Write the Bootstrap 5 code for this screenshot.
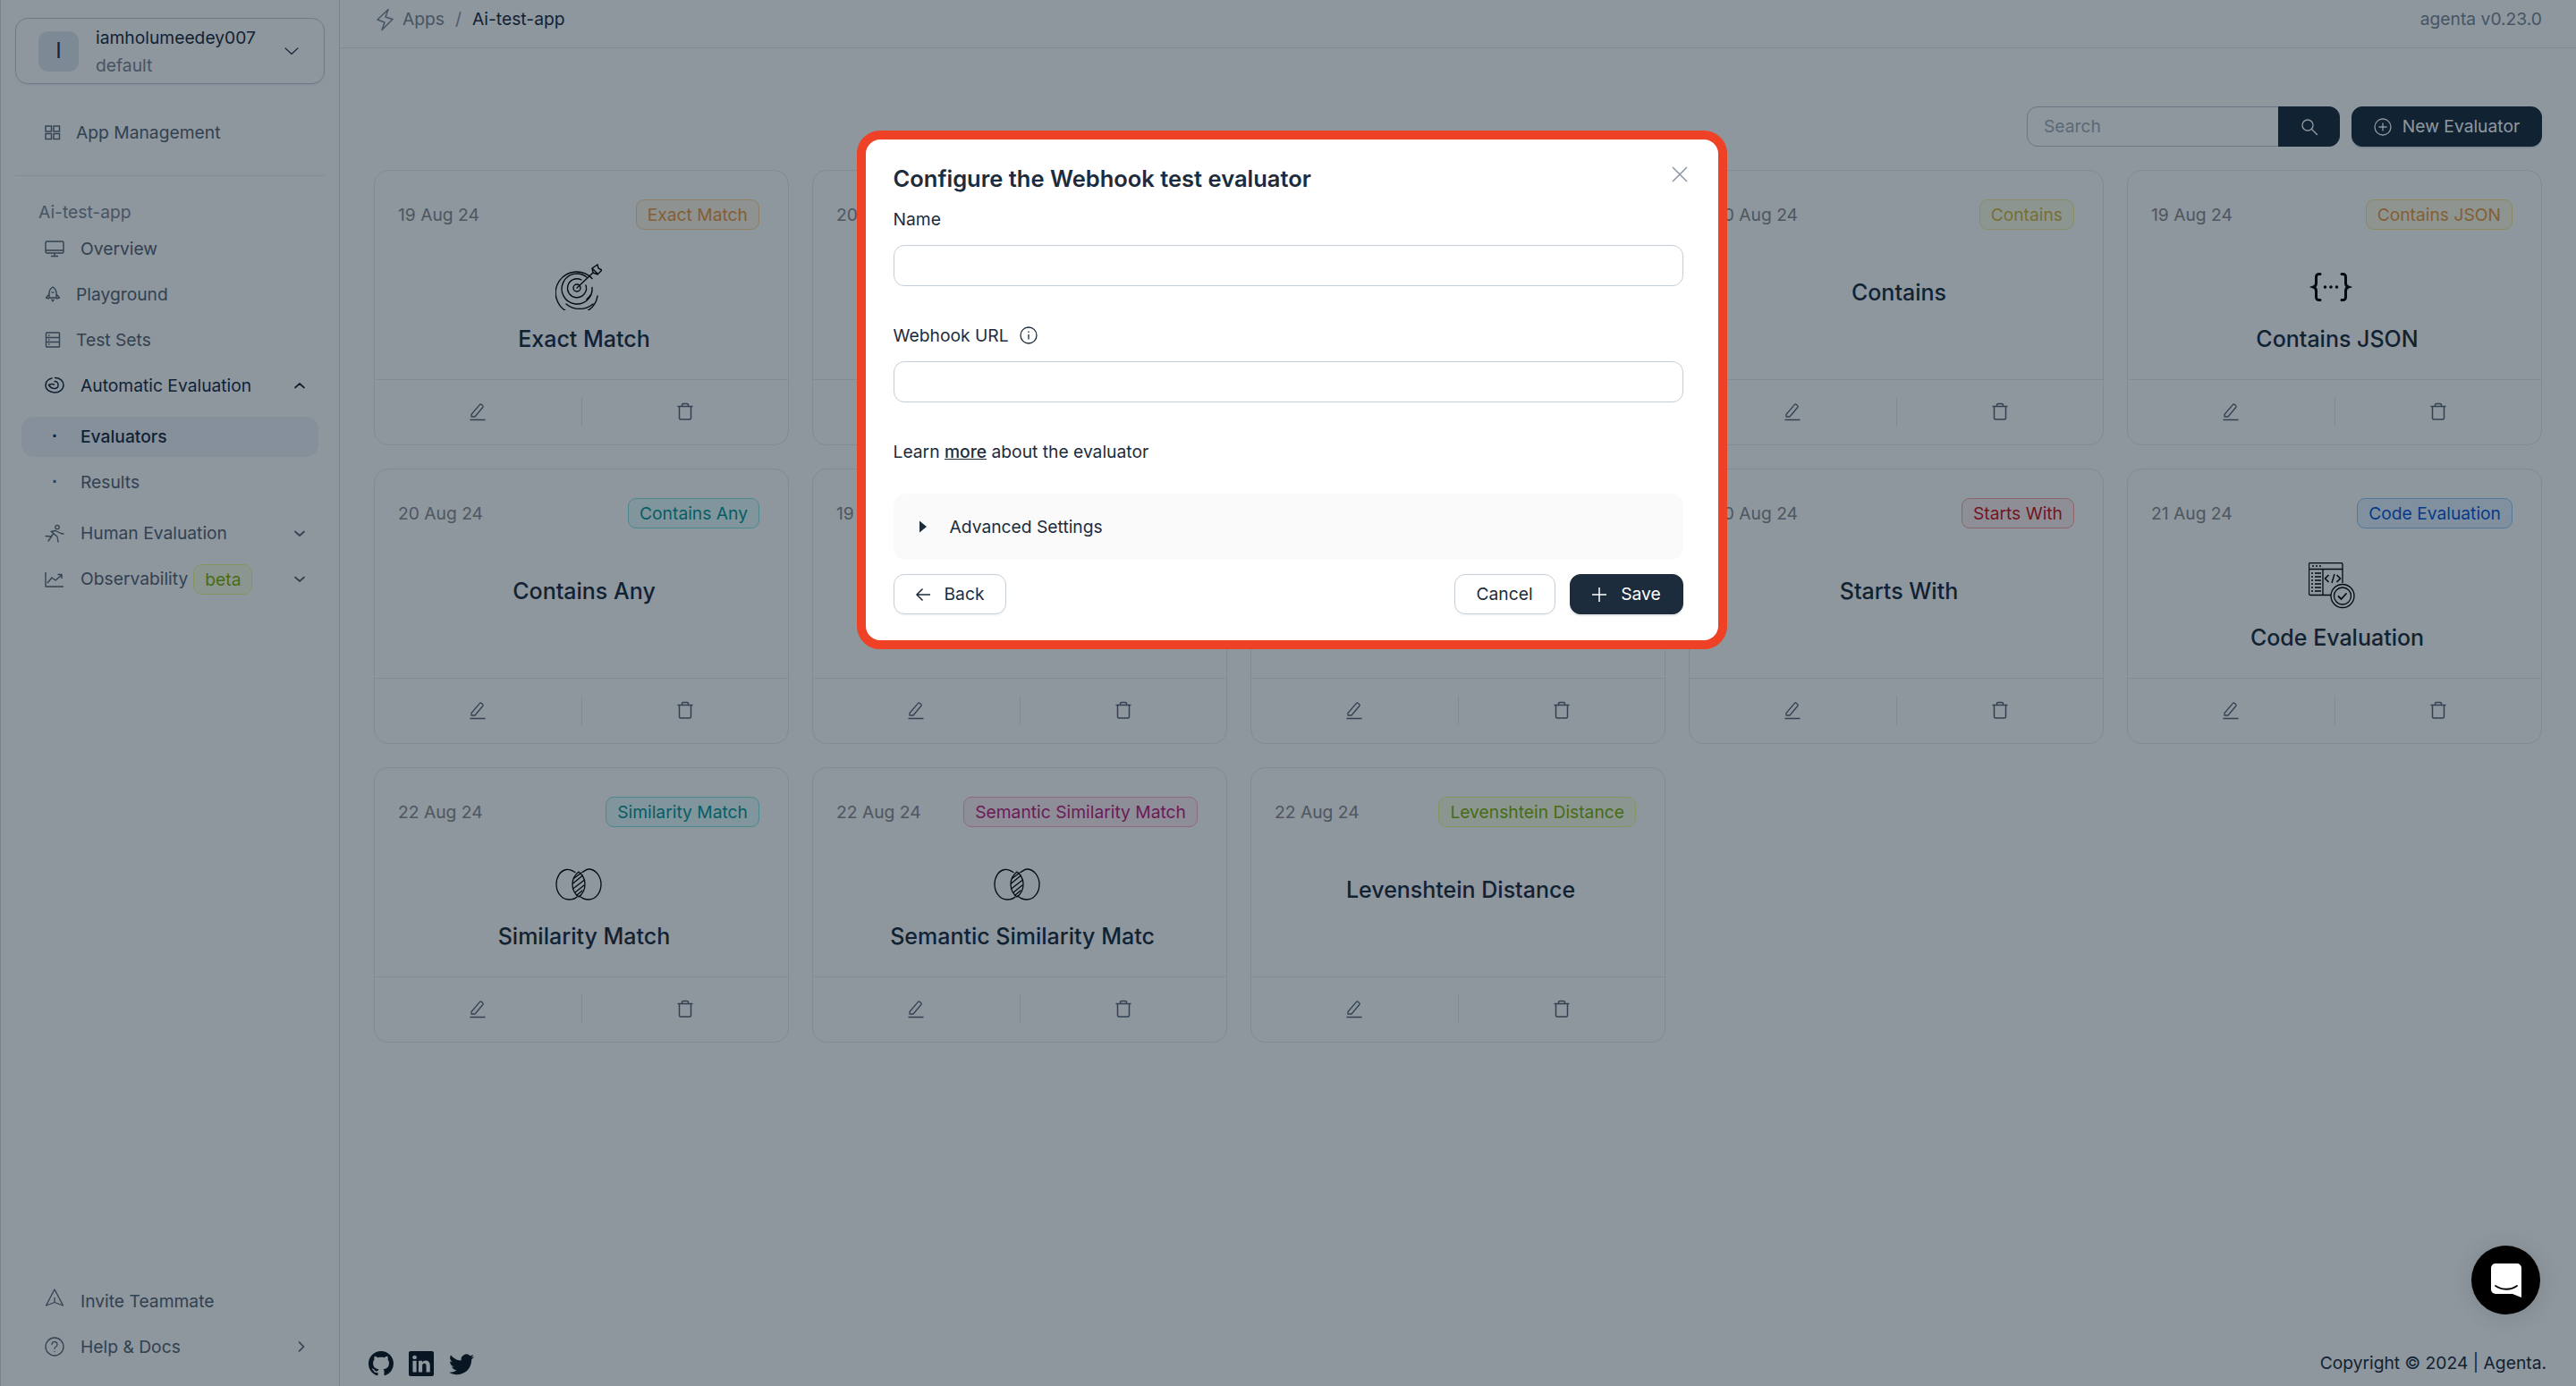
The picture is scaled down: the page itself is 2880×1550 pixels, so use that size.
<!DOCTYPE html>
<html lang="en">
<head>
    <meta charset="UTF-8">
    <title>Evaluators - Agenta</title>
    <link href="https://cdn.jsdelivr.net/npm/bootstrap@5.3.2/dist/css/bootstrap.min.css" rel="stylesheet">
    <style>
        html, body { height: 100%; }
        body {
            font-family: Inter, "Liberation Sans", sans-serif;
            font-size: 19.25px;
            color: #1c2c3d;
            background: #fff;
            overflow: hidden;
        }
        .page-wrap { height: 100vh; }

        /* sidebar */
        .side-bar {
            width: 380px;
            flex: none;
            border-left: 1px solid #d8dde3;
            border-right: 1px solid #d8dde3;
            padding: 20px 16px 21px;
        }
        .org-select {
            height: 74px;
            border: 1px solid #c5ced8;
            border-radius: 14px;
            padding: 0 27px 0 25px;
            box-shadow: 0 1px 2px rgba(28, 44, 61, .08);
        }
        .org-avatar {
            width: 45px;
            height: 45px;
            border-radius: 11px;
            background: #e2e8f0;
            margin-right: 19px;
            font-size: 24px;
        }
        .org-name { line-height: 32px; }
        .org-sub { line-height: 32px; color: #7d8996; margin-top: -1px; }
        .side-link {
            height: 46px;
            padding: 0 20px 0 33px;
            color: #586673;
            border-radius: 14px;
            text-decoration: none;
            white-space: nowrap;
        }
        .side-link .ico-s { width: 18px; height: 18px; margin-right: 17px; flex: none; }
        .side-link .ico-w { width: 22px; height: 22px; margin-right: 18px; flex: none; }
        .side-link .dot-mark { width: 22px; margin-right: 18px; text-align: center; line-height: 1; flex: none; font-weight: 700; }
        .side-link.is-open { color: #1c2c3d; }
        .side-link.is-active { color: #1c2c3d; background: #f1f4f8; height: 45px; font-weight: 500; margin: 0 7px; padding: 0 14px 0 26px; }
        .side-link .chev { margin-left: auto; width: 16px; height: 16px; flex: none; }
        .side-link .chev-far { margin-right: -2px; }
        .link-first { margin-top: 31px; }
        .ico-raised { margin-top: -6px; }
        .side-rule { border-top: 1px solid #e6ebf0; margin: 25px 0 26px; }
        .side-head { height: 28px; line-height: 28px; padding-left: 26px; color: #7d8996; margin-bottom: 4px; }
        .side-nav { gap: 5px; }
        .sub-nav { gap: 5.5px; margin: 6.5px 0; }
        .beta-tag {
            margin-left: 6px;
            height: 34px;
            padding: 0 12px;
            line-height: 32px;
            color: #7cb305;
            background: #fcffe6;
            border: 1px solid #eaff8f;
            border-radius: 10px;
        }

        /* main */
        .main-area { min-width: 0; }
        .top-strip { height: 54px; border-bottom: 1px solid #e6ebf0; padding: 0 38px 10px 40px; }
        .top-strip .breadcrumb { --bs-breadcrumb-margin-bottom: 0; --bs-breadcrumb-item-padding-x: 12px; --bs-breadcrumb-divider-color: #8a95a1; }
        .top-strip .breadcrumb-item, .top-strip .breadcrumb-item.active { color: #1c2c3d; }
        .top-strip .breadcrumb-item.crumb-link { color: #7d8996; }
        .top-strip .ico-bolt { width: 22px; height: 26px; margin-right: 8px; }
        .app-ver { color: #7d8996; }
        .main-body { padding: 65px 38px 0; }
        .tool-row { margin-bottom: 26px; }
        .search-box { width: 350px; margin-right: 13px; }
        .search-box .form-control {
            height: 45px;
            border-color: #bcc6d0;
            border-radius: 12px 0 0 12px;
            font-size: 19.25px;
            padding: 0 12px 2px 18px;
        }
        .search-box .form-control::placeholder { color: #a4adb8; }
        .btn-dark-app {
            background: #1c2c3d;
            border-color: #1c2c3d;
            color: #fff;
            font-size: 19.25px;
            box-shadow: 0 2px 0 rgba(28, 44, 61, .1);
        }
        .btn-dark-app:hover { background: #1c2c3d; color: #fff; }
        .search-box .btn-dark-app { width: 69px; padding: 0; border-radius: 0 12px 12px 0; box-shadow: none; }
        .btn-new { height: 45px; width: 213px; border-radius: 12px; padding: 0; }
        .btn-new svg { width: 20px; height: 20px; margin-right: 12px; }

        /* cards */
        .eval-grid { --bs-gutter-x: 26px; --bs-gutter-y: 26px; }
        .eval-card { height: 308px; border-color: #e6ebf0; border-radius: 16px; --bs-card-bg: #fff; }
        .eval-top { height: 34px; margin: 32px 32px 39px 26px; }
        .eval-date { color: #8c8c8c; }
        .eval-tag {
            height: 34px;
            padding: 0 12px;
            line-height: 32px;
            border: 1px solid;
            border-radius: 9px;
            white-space: nowrap;
        }
        .eval-ico { display: block; width: 52px; height: 52px; margin: 0 auto; position: relative; left: -3px; top: -1px; color: #000; }
        .eval-title { font-size: 25px; line-height: 32px; font-weight: 500; text-align: center; padding: 15px 0 0 6px; white-space: nowrap; }
        .eval-actions { height: 73px; margin-top: auto; border-top: 1px solid #e6ebf0; padding: 0 0 2px; flex: none; }
        .eval-btn { flex: 1; height: 33px; color: #586673; }
        .eval-btn + .eval-btn { border-left: 1px solid #e6ebf0; }
        .eval-btn svg { width: 20px; height: 22px; }
        .tag-orange { color: #ee9a3c; background: #fff7e6; border-color: #ffd591; }
        .tag-gold { color: #ee9a3c; background: #fffbe6; border-color: #ffe58f; }
        .tag-yellow { color: #d4b93a; background: #fefde8; border-color: #f5ee9a; }
        .tag-cyan { color: #08979c; background: #e6fffb; border-color: #87e8de; }
        .tag-red { color: #cf1322; background: #fff1f0; border-color: #ffa39e; }
        .tag-blue { color: #0958d9; background: #e6f4ff; border-color: #91caff; }
        .tag-magenta { color: #c41d7f; background: #fff0f6; border-color: #ffadd2; }
        .tag-lime { color: #7cb305; background: #fcffe6; border-color: #eaff8f; }

        .foot-strip { padding: 0 33px 11px 32px; margin-top: auto; }
        .foot-links { gap: 17px; color: #0b1520; }
        .foot-links svg { width: 28px; height: 28px; display: block; }

        /* overlay + dialog */
        .dim-layer { position: fixed; inset: 0; background: rgba(5, 23, 41, .45); z-index: 100; }
        .config-dialog {
            position: fixed;
            left: 957.5px;
            top: 146px;
            width: 973px;
            height: 580px;
            z-index: 110;
            background: #fff;
            border: 10px solid #ee4126;
            border-radius: 26px;
            padding: 28px 39px 0 31px;
        }
        .dialog-title { font-size: 25.5px; line-height: 32px; font-weight: 600; margin: 0 0 14px; }
        .dialog-close { position: absolute; top: 30px; right: 34px; width: 18px; height: 18px; color: #8a95a1; }
        .field-label { line-height: 30px; margin-bottom: 14px; }
        .field-info { margin-left: 12px; }
        .field-input { height: 46px; border-color: #c5ced8; border-radius: 12px; }
        .field-gap { margin-bottom: 40px; }
        .learn-line { line-height: 30px; margin: 40px 0 32px; }
        .learn-line a { color: #1c2c3d; font-weight: 500; }
        .adv-box { height: 74px; background: #fafafa; border-radius: 14px; padding: 0 0 0 28px; margin-bottom: 16px; }
        .adv-caret { width: 10px; height: 14px; margin-right: 25px; color: #1c2c3d; }
        .btn-plain {
            height: 45px;
            border: 1px solid #c5ced8;
            border-radius: 12px;
            background: #fff;
            color: #1c2c3d;
            font-size: 19.25px;
            padding: 0;
            box-shadow: 0 2px 0 rgba(28, 44, 61, .03);
        }
        .btn-back { width: 126px; }
        .btn-back svg, .btn-save svg { width: 18px; height: 18px; margin-right: 15px; }
        .btn-cancel { width: 113px; margin-right: 16px; }
        .btn-save { width: 127px; height: 45px; border-radius: 12px; padding: 0; }

        .chat-bubble {
            position: fixed;
            left: 2763px;
            top: 1393px;
            width: 77px;
            height: 77px;
            border-radius: 50%;
            background: #000;
            z-index: 120;
            box-shadow: 0 2px 24px rgba(0, 0, 0, .12);
        }
        .chat-bubble svg { width: 34px; height: 38px; }
    </style>
</head>
<body>
    <svg width="0" height="0" class="position-absolute">
        <defs>
            <symbol id="i-edit" viewBox="0 0 20 22"><path d="M3 14.500 12.300 3.600a1.500 1.500 0 0 1 2.100-.2l1.200 1a1.500 1.500 0 0 1 .2 2.100L7 17H3z M1.500 20.500h17" fill="none" stroke="currentColor" stroke-width="1.300" stroke-linejoin="round"/></symbol>
            <symbol id="i-trash" viewBox="0 0 20 22"><path d="M1.500 5.500h17 M6.500 5.500V4a1.500 1.500 0 0 1 1.500-1.500h4A1.500 1.500 0 0 1 13.500 4v1.500 M3.500 5.500v13a1.500 1.500 0 0 0 1.500 1.500h10a1.500 1.500 0 0 0 1.500-1.500v-13" fill="none" stroke="currentColor" stroke-width="1.500" stroke-linejoin="round"/></symbol>
            <symbol id="i-down" viewBox="0 0 16 16"><path d="M3 5.500 8 10l5-4.500" fill="none" stroke="currentColor" stroke-width="1.700" stroke-linecap="round" stroke-linejoin="round"/></symbol>
            <symbol id="i-target" viewBox="0 0 52 52" fill="none" stroke="currentColor" stroke-width="1.400" stroke-linecap="round">
                <path d="M41 16.500A23.500 23.500 0 1 0 47 36M12 45a23.500 23.500 0 0 0 30 0"/>
                <path d="M35 15A17 17 0 1 0 41 26.500M39 35a17 17 0 0 1-4 4.500"/>
                <path d="M29 18A10.500 10.500 0 1 0 34 24"/>
                <circle cx="24" cy="27" r="4"/>
                <path d="M24 27 42 10M42 10l-1-5 6-4 1 4 4 2-5 5z M41 5l6 6"/>
            </symbol>
            <symbol id="i-json" viewBox="0 0 52 52" fill="none" stroke="currentColor" stroke-width="3" stroke-linecap="round">
                <path d="M13 11.500h-1.500a3 3 0 0 0-3 3v7c0 2-1.500 4-3 4.500 1.500.5 3 2.500 3 4.500v7a3 3 0 0 0 3 3H13"/>
                <path d="M37 11.500h1.500a3 3 0 0 1 3 3v7c0 2 1.500 4 3 4.500-1.500.5-3 2.500-3 4.500v7a3 3 0 0 1-3 3H37"/>
                <path d="M18.500 26h.01M25 26h.01M31.500 26h.01" stroke-width="3.600"/>
            </symbol>
            <symbol id="i-code" viewBox="0 0 52 52" fill="none" stroke="currentColor" stroke-width="1.300">
                <path d="M38 23V2a1.500 1.500 0 0 0-1.500-1.500h-35A1.500 1.500 0 0 0 .500 2v33A1.500 1.500 0 0 0 2 36.500h23M.5 7.500h37.500M16 7.500v29"/>
                <path d="M4 4h2M8 4h2M12 4h2" stroke-width="1.600"/>
                <path d="M3 12h2M7 12h7M3 16h2M7 16h7M3 20h2M7 20h7M3 24h2M7 24h7M3 28h2M7 28h7M3 32h2M7 32h7" stroke-width="1.500"/>
                <path d="M23 14l-4 4 4 4M32 14l4 4-4 4" transform="translate(-.5 0)" stroke-width="1.600"/>
                <path d="M29 13l-3 10" stroke-width="1.400"/>
                <circle cx="38" cy="37.500" r="13"/>
                <circle cx="38" cy="37.500" r="9.500"/>
                <path d="M33.500 38l3 3 5.500-6" stroke-width="1.800" stroke-linecap="round"/>
            </symbol>
            <symbol id="i-venn" viewBox="0 0 52 52" fill="none" stroke="currentColor" stroke-width="1.300" stroke-linecap="round">
                <path d="M22 12.500C18 10 14 9 12 9.500 5 11 1 18 1 26c0 9 6 17 14 17 4 0 7-1 9-3"/>
                <path d="M30 12.500C34 10 35 9 37 9c8 0 14 8 14 17s-6 17-14 17c-4 0-7-1-10-4"/>
                <path d="M26 12c-4 3-7 8-7 14s3 11 7 14c4-3 7-8 7-14s-3-11-7-14z"/>
                <path d="M21 19l8-6M19.500 25l11-9M19.500 31l13-10M22 35l10-8M24 38l6-5"/>
            </symbol>
        </defs>
    </svg>

    <div class="page-wrap d-flex">
        <aside class="side-bar d-flex flex-column">
            <div class="org-select d-flex align-items-center">
                <div class="org-avatar d-flex align-items-center justify-content-center">I</div>
                <div class="flex-grow-1">
                    <div class="org-name">iamholumeedey007</div>
                    <div class="org-sub">default</div>
                </div>
                <svg width="18" height="18" viewBox="0 0 16 16"><path d="M1.500 5 8 11l6.500-6" fill="none" stroke="#1c2c3d" stroke-width="1.200"/></svg>
            </div>

            <a class="side-link link-first d-flex align-items-center" href="#">
                <svg class="ico-s" viewBox="0 0 18 18" fill="none" stroke="currentColor" stroke-width="1.400"><rect x="1" y="2" width="6.500" height="6"/><rect x="10" y="2" width="6.500" height="6"/><rect x="1" y="10.500" width="6.500" height="6"/><rect x="10" y="10.500" width="6.500" height="6"/></svg>
                App Management
            </a>
            <div class="side-rule"></div>
            <div class="side-head">Ai-test-app</div>

            <nav class="side-nav d-flex flex-column">
                <a class="side-link d-flex align-items-center" href="#">
                    <svg class="ico-w" viewBox="0 0 22 22" fill="none" stroke="currentColor" stroke-width="1.400"><rect x="1" y="3" width="20" height="13" rx="1.500"/><path d="M1 13h20M11 16v3.500M7 19.500h8"/></svg>
                    Overview
                </a>
                <a class="side-link d-flex align-items-center" href="#">
                    <svg class="ico-s" viewBox="0 0 18 18" fill="none" stroke="currentColor" stroke-width="1.400" stroke-linejoin="round"><path d="M9 1c3 2 4 4 4 7v5H5V8c0-3 1-5 4-7zM5 9l-3.500 4 3.500 1M13 9l3.500 4-3.500 1M7.500 14.500 9 17l1.500-2.500"/><path d="M7.500 7h3"/></svg>
                    Playground
                </a>
                <a class="side-link d-flex align-items-center" href="#">
                    <svg class="ico-s" viewBox="0 0 18 18" fill="none" stroke="currentColor" stroke-width="1.400"><rect x="1.500" y="1" width="15" height="16" rx=".8"/><path d="M1.500 6.500h15M1.500 11.500h15M4 4h1.500M4 9h1.500M4 14h1.500"/></svg>
                    Test Sets
                </a>
                <a class="side-link is-open d-flex align-items-center" href="#">
                    <svg class="ico-w" viewBox="0 0 22 22" fill="none" stroke="currentColor" stroke-width="1.500" stroke-linecap="round"><path d="M8 3C4 4 1 7 1 11c0 4.500 4.500 8 10 8s10-3.500 10-8.500c0-4.500-4-8-9.500-8"/><path d="M11 6.500c2.500 0 4 1.800 4 4s-1.500 4-4 4c-3 0-5-1.500-6.500-4 2-1 4-1.500 6-.5"/></svg>
                    Automatic Evaluation
                    <svg class="chev" viewBox="0 0 16 16"><path d="M3 10.500 8 6l5 4.500" fill="none" stroke="currentColor" stroke-width="1.700" stroke-linecap="round" stroke-linejoin="round"/></svg>
                </a>
                <div class="sub-nav d-flex flex-column">
                    <a class="side-link is-active d-flex align-items-center" href="#"><span class="dot-mark">&middot;</span>Evaluators</a>
                    <a class="side-link d-flex align-items-center" href="#"><span class="dot-mark">&middot;</span>Results</a>
                </div>
                <a class="side-link d-flex align-items-center" href="#">
                    <svg class="ico-w" viewBox="0 0 22 22" fill="none" stroke="currentColor" stroke-width="1.300" stroke-linecap="round" stroke-linejoin="round"><circle cx="14" cy="3.500" r="2.200"/><path d="M1 13.500l6 .5 3-3.500-3-2 5-1 6 3 3 .5M10 11l4 3 1 6M8 13.500 4 19"/></svg>
                    Human Evaluation
                    <svg class="chev"><use href="#i-down"/></svg>
                </a>
                <a class="side-link d-flex align-items-center" href="#">
                    <svg class="ico-w" viewBox="0 0 22 22" fill="none" stroke="currentColor" stroke-width="1.400" stroke-linejoin="round"><path d="M1 3v16h20M3 15l5-6 4 3 7-6M14.500 5.500H19V10"/></svg>
                    Observability
                    <span class="beta-tag">beta</span>
                    <svg class="chev"><use href="#i-down"/></svg>
                </a>
            </nav>

            <div class="mt-auto d-flex flex-column side-nav">
                <a class="side-link d-flex align-items-center" href="#">
                    <svg class="ico-w ico-raised" viewBox="0 0 22 22" fill="none" stroke="currentColor" stroke-width="1.300" stroke-linejoin="round"><path d="M11 1 20.500 19 11 15.500 1.500 19zM11 15.500V10"/></svg>
                    Invite Teammate
                </a>
                <a class="side-link d-flex align-items-center" href="#">
                    <svg class="ico-w" viewBox="0 0 22 22" fill="none" stroke="currentColor" stroke-width="1.300" stroke-linecap="round"><circle cx="11" cy="11" r="10"/><path d="M8 8.500a3 3 0 1 1 4.600 2.500c-1 .6-1.600 1.200-1.600 2.300M11 16.500h.01"/></svg>
                    Help &amp; Docs
                    <svg class="chev chev-far" viewBox="0 0 16 16"><path d="M5.500 3 10.500 8l-5 5" fill="none" stroke="currentColor" stroke-width="1.700" stroke-linecap="round" stroke-linejoin="round"/></svg>
                </a>
            </div>
        </aside>

        <main class="main-area flex-grow-1 d-flex flex-column">
            <div class="top-strip d-flex align-items-center justify-content-between">
                <div class="d-flex align-items-center">
                    <svg class="ico-bolt" viewBox="0 0 22 26" fill="none" stroke="#7d8996" stroke-width="1.500" stroke-linejoin="round"><path d="M14 1.500 11 10l8 2.500L7 24.500l3-8.500-8-3z"/></svg>
                    <ol class="breadcrumb">
                        <li class="breadcrumb-item crumb-link">Apps</li>
                        <li class="breadcrumb-item active">Ai-test-app</li>
                    </ol>
                </div>
                <div class="app-ver">agenta v0.23.0</div>
            </div>

            <div class="main-body">
                <div class="tool-row d-flex justify-content-end">
                    <div class="input-group search-box flex-nowrap">
                        <input type="text" class="form-control" placeholder="Search">
                        <button class="btn btn-dark-app d-flex align-items-center justify-content-center" type="button">
                            <svg width="20" height="20" viewBox="0 0 20 20" fill="none" stroke="#fff" stroke-width="1.400" stroke-linecap="round"><circle cx="8" cy="8" r="6"/><path d="m12.500 12.500 6 6"/></svg>
                        </button>
                    </div>
                    <button class="btn btn-dark-app btn-new d-flex align-items-center justify-content-center" type="button">
                        <svg viewBox="0 0 20 20" fill="none" stroke="#fff" stroke-width="1.300"><circle cx="10" cy="10" r="9"/><path d="M10 5.500v9M5.500 10h9"/></svg>
                        New Evaluator
                    </button>
                </div>

                <div class="row row-cols-5 eval-grid" id="evalGrid"></div>
            </div>

            <div class="foot-strip d-flex align-items-center justify-content-between">
                <div class="foot-links d-flex align-items-center">
                    <svg viewBox="0 0 16 16" fill="currentColor"><path d="M8 0C3.580 0 0 3.580 0 8c0 3.540 2.290 6.530 5.470 7.590.4.070.55-.17.55-.38 0-.19-.01-.82-.01-1.490-2.010.37-2.530-.49-2.690-.94-.09-.23-.48-.94-.82-1.130-.28-.15-.68-.52-.01-.53.63-.01 1.080.58 1.230.82.72 1.210 1.870.87 2.330.66.07-.52.28-.87.51-1.070-1.780-.2-3.640-.89-3.640-3.950 0-.87.31-1.590.82-2.150-.08-.2-.36-1.020.08-2.120 0 0 .67-.21 2.200.82.64-.18 1.320-.27 2-.27.68 0 1.360.09 2 .27 1.530-1.040 2.200-.82 2.200-.82.44 1.100.16 1.920.08 2.120.51.56.82 1.270.82 2.150 0 3.070-1.870 3.750-3.650 3.950.29.25.54.73.54 1.480 0 1.070-.01 1.930-.01 2.200 0 .21.15.46.55.38A8.012 8.012 0 0 0 16 8c0-4.420-3.580-8-8-8z"/></svg>
                    <svg viewBox="0 0 16 16" fill="currentColor"><path d="M0 1.146C0 .513.526 0 1.175 0h13.650C15.474 0 16 .513 16 1.146v13.708c0 .633-.526 1.146-1.175 1.146H1.175C.526 16 0 15.487 0 14.854V1.146zm4.943 12.248V6.169H2.542v7.225h2.401zm-1.200-8.212c.837 0 1.358-.554 1.358-1.248-.015-.709-.52-1.248-1.342-1.248-.822 0-1.359.54-1.359 1.248 0 .694.521 1.248 1.327 1.248h.016zm4.908 8.212V9.359c0-.216.016-.432.08-.586.173-.431.568-.878 1.232-.878.869 0 1.216.662 1.216 1.634v3.865h2.401V9.250c0-2.220-1.184-3.252-2.764-3.252-1.274 0-1.845.7-2.165 1.193v.025h-.016a5.540 5.540 0 0 1 .016-.025V6.169h-2.400c.03.678 0 7.225 0 7.225h2.400z"/></svg>
                    <svg viewBox="0 0 16 16" fill="currentColor"><path d="M5.026 15c6.038 0 9.341-5.003 9.341-9.334 0-.14 0-.282-.006-.422A6.685 6.685 0 0 0 16 3.542a6.658 6.658 0 0 1-1.889.518 3.301 3.301 0 0 0 1.447-1.817 6.533 6.533 0 0 1-2.087.793A3.286 3.286 0 0 0 7.875 6.030a9.325 9.325 0 0 1-6.767-3.429 3.289 3.289 0 0 0 1.018 4.382A3.323 3.323 0 0 1 .64 6.575v.045a3.288 3.288 0 0 0 2.632 3.218 3.203 3.203 0 0 1-.865.115 3.230 3.230 0 0 1-.614-.057 3.283 3.283 0 0 0 3.067 2.277A6.588 6.588 0 0 1 .78 13.580a6.320 6.320 0 0 1-.78-.045A9.344 9.344 0 0 0 5.026 15z"/></svg>
                </div>
                <div>Copyright &copy; 2024 | Agenta.</div>
            </div>
        </main>
    </div>

    <div class="dim-layer"></div>

    <div class="config-dialog">
        <h5 class="dialog-title">Configure the Webhook test evaluator</h5>
        <svg class="dialog-close" viewBox="0 0 18 18" fill="none" stroke="currentColor" stroke-width="1.500"><path d="m1 1 16 16M17 1 1 17"/></svg>

        <div class="field-gap">
            <label class="field-label d-block">Name</label>
            <input type="text" class="form-control field-input">
        </div>
        <div>
            <label class="field-label d-flex align-items-center">Webhook URL
                <svg class="field-info" width="20" height="20" viewBox="0 0 20 20" fill="none" stroke="#1c2c3d" stroke-width="1.300"><circle cx="10" cy="10" r="9"/><path d="M10 9v5.500M10 5.500v1.500"/></svg>
            </label>
            <input type="text" class="form-control field-input">
        </div>
        <div class="learn-line">Learn <a href="#">more</a> about the evaluator</div>

        <div class="adv-box d-flex align-items-center">
            <svg class="adv-caret" viewBox="0 0 10 14"><path d="M1 0.500 9 7l-8 6.500z" fill="currentColor"/></svg>
            Advanced Settings
        </div>

        <div class="d-flex align-items-center">
            <button class="btn btn-plain btn-back d-flex align-items-center justify-content-center" type="button">
                <svg viewBox="0 0 18 18" fill="none" stroke="currentColor" stroke-width="1.500"><path d="M17 9H2M8.500 2.500 2 9l6.500 6.500"/></svg>
                Back
            </button>
            <button class="btn btn-plain btn-cancel ms-auto" type="button">Cancel</button>
            <button class="btn btn-dark-app btn-save d-flex align-items-center justify-content-center" type="button">
                <svg viewBox="0 0 18 18" fill="none" stroke="#fff" stroke-width="1.500"><path d="M9 1v16M1 9h16"/></svg>
                Save
            </button>
        </div>
    </div>

    <div class="chat-bubble d-flex align-items-center justify-content-center">
        <svg viewBox="0 0 34 38"><path d="M5 0h24a5 5 0 0 1 5 5v33l-10-4H5a5 5 0 0 1-5-5V5a5 5 0 0 1 5-5z" fill="#fff"/><path d="M5 25c7 5 17 5 24 0" fill="none" stroke="#000" stroke-width="1.800" stroke-linecap="round"/></svg>
    </div>

    <script src="https://cdn.jsdelivr.net/npm/bootstrap@5.3.2/dist/js/bootstrap.bundle.min.js"></script>
    <script>
        // cards 2, 3, 7 and 8 sit behind the dialog: only the start of the date shows
        const evaluators = [
            { date: '19 Aug 24', name: 'Exact Match', tag: 'Exact Match', color: 'orange', icon: 'target' },
            { date: '20' },
            { date: '' },
            { date: '20 Aug 24', name: 'Contains', tag: 'Contains', color: 'yellow' },
            { date: '19 Aug 24', name: 'Contains JSON', tag: 'Contains JSON', color: 'gold', icon: 'json' },
            { date: '20 Aug 24', name: 'Contains Any', tag: 'Contains Any', color: 'cyan' },
            { date: '19' },
            { date: '' },
            { date: '20 Aug 24', name: 'Starts With', tag: 'Starts With', color: 'red' },
            { date: '21 Aug 24', name: 'Code Evaluation', tag: 'Code Evaluation', color: 'blue', icon: 'code' },
            { date: '22 Aug 24', name: 'Similarity Match', tag: 'Similarity Match', color: 'cyan', icon: 'venn' },
            { date: '22 Aug 24', name: 'Semantic Similarity Matc', tag: 'Semantic Similarity Match', color: 'magenta', icon: 'venn' },
            { date: '22 Aug 24', name: 'Levenshtein Distance', tag: 'Levenshtein Distance', color: 'lime' }
        ];

        function renderEvaluators() {
            const grid = document.getElementById('evalGrid');
            evaluators.forEach(item => {
                const col = document.createElement('div');
                col.className = 'col';
                const icon = item.icon
                    ? `<svg class="eval-ico"><use href="#i-${item.icon}"/></svg>`
                    : '';
                const tag = item.tag
                    ? `<span class="eval-tag tag-${item.color}">${item.tag}</span>`
                    : '';
                const title = item.name
                    ? `<div class="eval-title">${item.name}</div>`
                    : '';
                col.innerHTML = `
                    <div class="card eval-card">
                        <div class="eval-top d-flex align-items-center justify-content-between">
                            <span class="eval-date">${item.date}</span>
                            ${tag}
                        </div>
                        ${icon}
                        ${title}
                        <div class="eval-actions d-flex align-items-center">
                            <div class="eval-btn d-flex align-items-center justify-content-center"><svg><use href="#i-edit"/></svg></div>
                            <div class="eval-btn d-flex align-items-center justify-content-center"><svg><use href="#i-trash"/></svg></div>
                        </div>
                    </div>`;
                grid.appendChild(col);
            });
        }

        renderEvaluators();
    </script>
</body>
</html>
